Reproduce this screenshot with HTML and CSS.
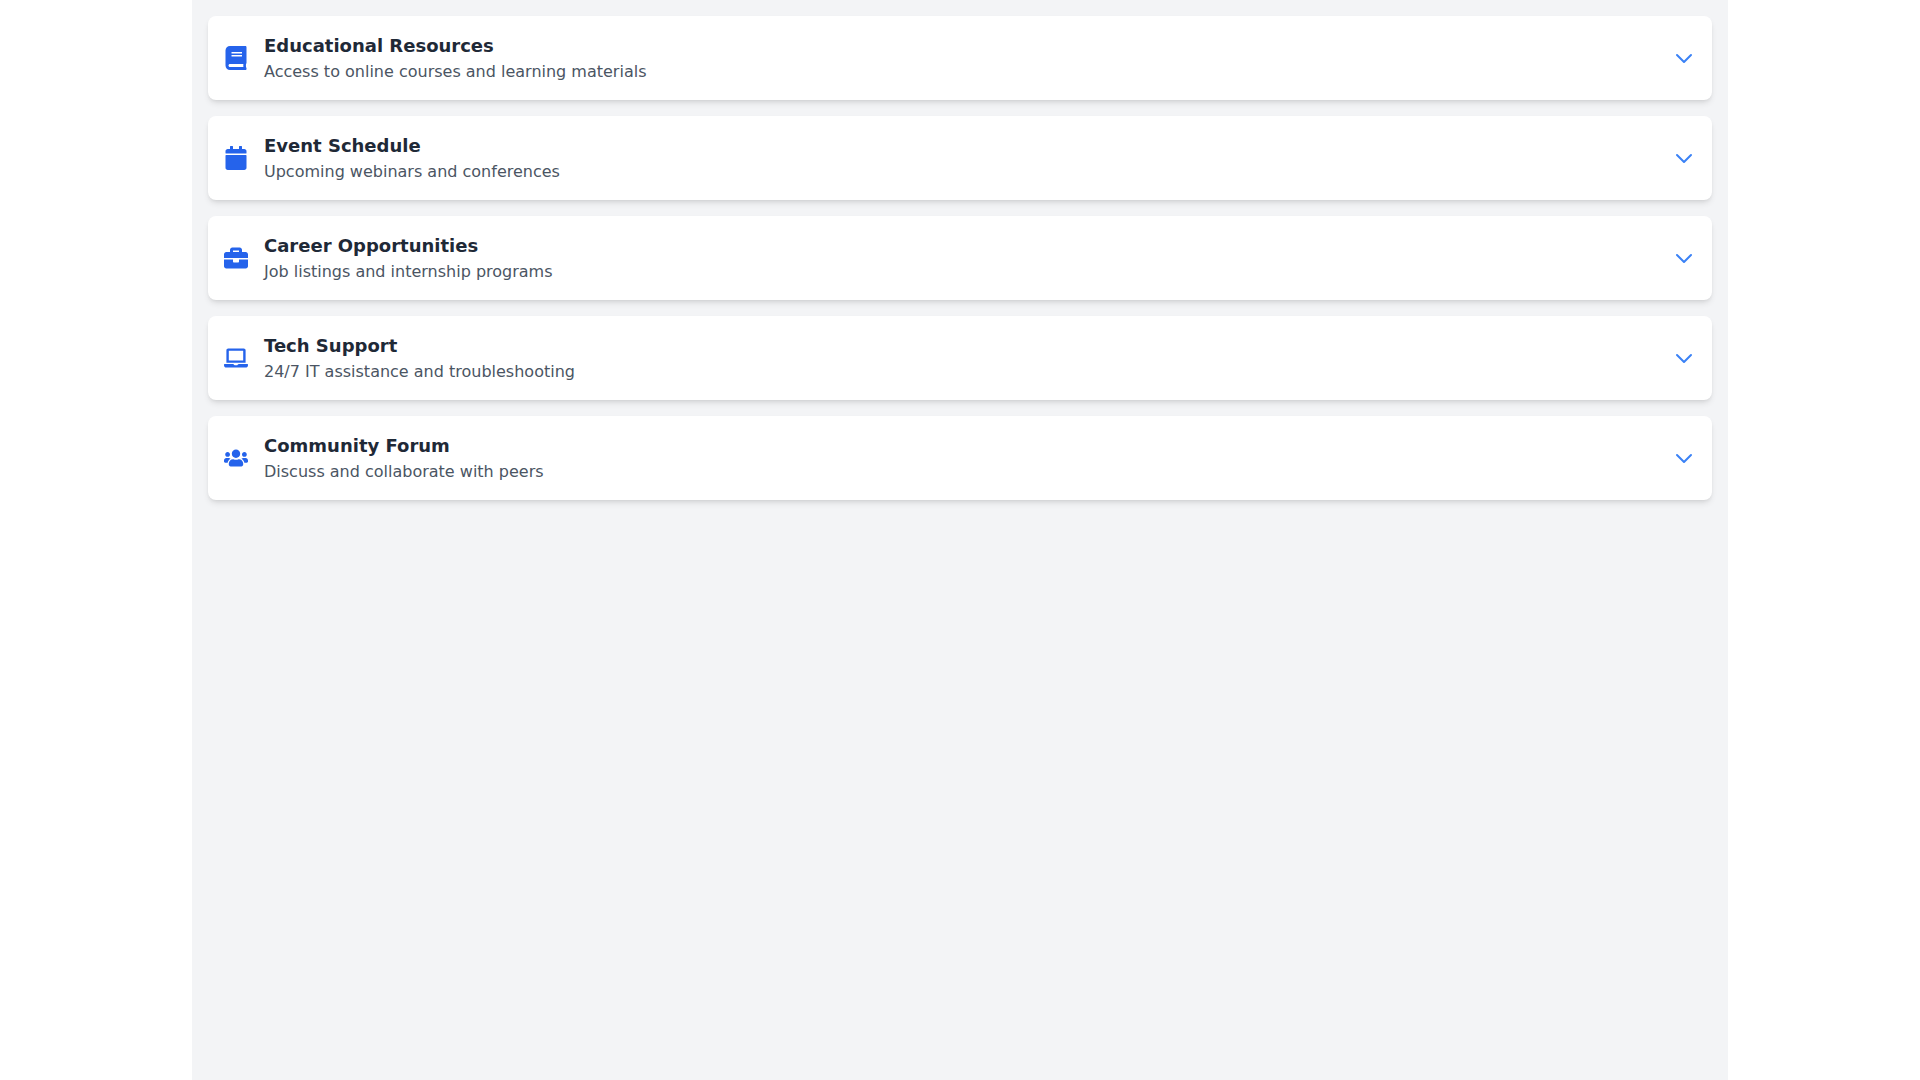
FILE: index.html
```html
<!DOCTYPE html>
<html lang="en">
<head>
  <meta charset="utf-8">
  <meta name="viewport" content="width=device-width, initial-scale=1">
  <title>Resources</title>
  <link rel="stylesheet" href="styles.css">
</head>
<body>
  <main class="container">
    <h2 class="card">
      <button class="card-toggle" type="button" aria-expanded="false">
        <svg class="icon" viewBox="0 0 448 512" aria-hidden="true"><path d="M448 360V24c0-13.300-10.700-24-24-24H96C43 0 0 43 0 96v320c0 53 43 96 96 96h328c13.300 0 24-10.700 24-24v-16c0-7.500-3.500-14.300-8.900-18.700-4.200-15.400-4.200-59.300 0-74.700 5.400-4.300 8.900-11.100 8.900-18.600zM128 134c0-3.300 2.700-6 6-6h212c3.300 0 6 2.700 6 6v20c0 3.300-2.700 6-6 6H134c-3.300 0-6-2.700-6-6v-20zm0 64c0-3.300 2.700-6 6-6h212c3.300 0 6 2.700 6 6v20c0 3.300-2.700 6-6 6H134c-3.300 0-6-2.700-6-6v-20zm253.400 250H96c-17.700 0-32-14.300-32-32 0-17.600 14.400-32 32-32h285.400c-1.900 17.100-1.900 46.900 0 64z"/></svg>
        <span class="text">
          <span class="title">Educational Resources</span>
          <span class="description">Access to online courses and learning materials</span>
        </span>
        <svg class="chevron" viewBox="0 0 24 24" aria-hidden="true"><path d="M19 9l-7 7-7-7"/></svg>
      </button>
    </h2>
    <h2 class="card">
      <button class="card-toggle" type="button" aria-expanded="false">
        <svg class="icon" viewBox="0 0 448 512" aria-hidden="true"><path d="M12 192h424c6.600 0 12 5.400 12 12v260c0 26.500-21.500 48-48 48H48c-26.500 0-48-21.500-48-48V204c0-6.600 5.400-12 12-12zm436-44v-36c0-26.500-21.500-48-48-48h-48V12c0-6.600-5.400-12-12-12h-40c-6.600 0-12 5.400-12 12v52H160V12c0-6.600-5.400-12-12-12h-40c-6.600 0-12 5.400-12 12v52H48C21.500 64 0 85.500 0 112v36c0 6.600 5.400 12 12 12h424c6.600 0 12-5.400 12-12z"/></svg>
        <span class="text">
          <span class="title">Event Schedule</span>
          <span class="description">Upcoming webinars and conferences</span>
        </span>
        <svg class="chevron" viewBox="0 0 24 24" aria-hidden="true"><path d="M19 9l-7 7-7-7"/></svg>
      </button>
    </h2>
    <h2 class="card">
      <button class="card-toggle" type="button" aria-expanded="false">
        <svg class="icon" viewBox="0 0 512 512" aria-hidden="true"><path d="M320 336c0 8.840-7.160 16-16 16h-96c-8.840 0-16-7.160-16-16v-48H0v144c0 25.600 22.400 48 48 48h416c25.600 0 48-22.400 48-48V288H320v48zm144-208h-80V80c0-25.600-22.400-48-48-48H176c-25.600 0-48 22.400-48 48v48H48c-25.600 0-48 22.400-48 48v80h512v-80c0-25.600-22.400-48-48-48zm-144 0H192V96h128v32z"/></svg>
        <span class="text">
          <span class="title">Career Opportunities</span>
          <span class="description">Job listings and internship programs</span>
        </span>
        <svg class="chevron" viewBox="0 0 24 24" aria-hidden="true"><path d="M19 9l-7 7-7-7"/></svg>
      </button>
    </h2>
    <h2 class="card">
      <button class="card-toggle" type="button" aria-expanded="false">
        <svg class="icon" viewBox="0 0 640 512" aria-hidden="true"><path d="M624 416H381.540c-.740 19.810-14.710 32-32.740 32H288c-18.690 0-33.020-17.470-32.770-32H16c-8.800 0-16 7.200-16 16v16c0 35.200 28.800 64 64 64h512c35.200 0 64-28.800 64-64v-16c0-8.800-7.200-16-16-16zM576 48c0-26.400-21.600-48-48-48H112C85.600 0 64 21.600 64 48v336h512V48zm-64 272H128V64h384v256z"/></svg>
        <span class="text">
          <span class="title">Tech Support</span>
          <span class="description">24/7 IT assistance and troubleshooting</span>
        </span>
        <svg class="chevron" viewBox="0 0 24 24" aria-hidden="true"><path d="M19 9l-7 7-7-7"/></svg>
      </button>
    </h2>
    <h2 class="card">
      <button class="card-toggle" type="button" aria-expanded="false">
        <svg class="icon" viewBox="0 0 640 512" aria-hidden="true"><path d="M96 224c35.300 0 64-28.700 64-64s-28.700-64-64-64-64 28.700-64 64 28.700 64 64 64zm448 0c35.300 0 64-28.700 64-64s-28.700-64-64-64-64 28.700-64 64 28.700 64 64 64zm32 32h-64c-17.600 0-33.500 7.100-45.100 18.600 40.300 22.100 68.900 62 75.100 109.400h66c17.700 0 32-14.300 32-32v-32c0-35.300-28.700-64-64-64zm-256 0c61.900 0 112-50.100 112-112S381.900 32 320 32 208 82.100 208 144s50.100 112 112 112zm76.800 32h-8.300c-20.800 10-43.900 16-68.500 16s-47.600-6-68.500-16h-8.300C179.600 288 128 339.600 128 403.200V432c0 26.500 21.500 48 48 48h288c26.500 0 48-21.500 48-48v-28.800c0-63.600-51.600-115.200-115.200-115.200zm-223.700-13.400C161.500 263.100 145.600 256 128 256H64c-35.300 0-64 28.700-64 64v32c0 17.700 14.300 32 32 32h65.900c6.300-47.400 34.900-87.300 75.200-109.400z"/></svg>
        <span class="text">
          <span class="title">Community Forum</span>
          <span class="description">Discuss and collaborate with peers</span>
        </span>
        <svg class="chevron" viewBox="0 0 24 24" aria-hidden="true"><path d="M19 9l-7 7-7-7"/></svg>
      </button>
    </h2>
  </main>
</body>
</html>
```
FILE: styles.css
```css
*,
*::before,
*::after {
  box-sizing: border-box;
}

body {
  margin: 0;
  background: #ffffff;
  font-family: "DejaVu Sans", sans-serif;
  font-size: 16px;
  line-height: 24px;
}

.container {
  display: flex;
  flex-direction: column;
  gap: 16px;
  max-width: 1536px;
  min-height: 100vh;
  margin: 0 auto;
  padding: 16px;
  background: #f3f4f6;
}

.card {
  margin: 0;
  font-size: 16px;
  font-weight: 400;
  background: #ffffff;
  border-radius: 8px;
  box-shadow: 0 4px 6px -1px rgba(0, 0, 0, 0.1), 0 2px 4px -2px rgba(0, 0, 0, 0.1);
}

.card-toggle {
  display: flex;
  align-items: center;
  gap: 16px;
  width: 100%;
  padding: 16px;
  border: 0;
  border-radius: 8px;
  background: transparent;
  font: inherit;
  text-align: left;
  cursor: pointer;
}

.icon,
.chevron {
  flex: none;
  width: 24px;
  height: 24px;
}

.icon {
  fill: #2563eb;
}

.chevron {
  fill: none;
  stroke: #3b82f6;
  stroke-width: 2;
  stroke-linecap: round;
  stroke-linejoin: round;
}

.text {
  display: flex;
  flex: 1;
  flex-direction: column;
}

.title {
  color: #1f2937;
  font-size: 18px;
  font-weight: 600;
  line-height: 28px;
}

.description {
  color: #4b5563;
}
```
